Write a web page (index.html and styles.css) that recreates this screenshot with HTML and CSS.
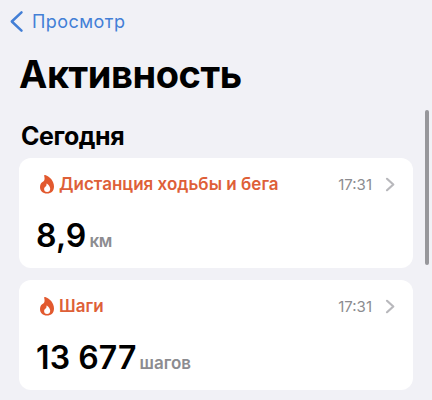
FILE: index.html
```html
<!DOCTYPE html>
<html lang="ru">
<head>
<meta charset="utf-8">
<title>Активность</title>
<link rel="stylesheet" href="styles.css">
</head>
<body>
<nav class="nav">
  <svg class="back" viewBox="0 0 13 21"><path d="M11.500 1.300 1.800 10.500l9.700 9.200"/></svg>
  <span class="nav-label">Просмотр</span>
</nav>
<h1 class="title">Активность</h1>
<h2 class="section">Сегодня</h2>
<main class="cards">
  <section class="card">
    <header class="head">
      <svg class="flame" viewBox="0 0 14 19"><path fill-rule="evenodd" d="M5.200.1C10 1.500 14 6.400 14 11.500C14 15.800 11.200 18.600 7 18.600C2.800 18.600 0 16 0 12.100C0 8.800 1.700 6.900 3.300 6.400C4.600 5.700 4.900 3.300 4.300 1.400C4 .4 4.300-.1 5.200.1ZM7.100 8.700C8.800 9.900 10.200 11.900 10.200 13.800C10.200 15.800 9 17.100 7.100 17.100C5.200 17.100 4.100 15.900 4.100 14.100C4.100 12.800 4.800 12.100 5.600 11.400C6.400 10.700 6.500 10 6.500 9.200C6.500 8.700 6.800 8.500 7.100 8.700Z"/></svg>
      <span class="name">Дистанция ходьбы и бега</span>
      <time class="time">17:31</time>
      <svg class="chevron" viewBox="0 0 8 13"><path d="M1 .8 7.300 6.500 1 12.200"/></svg>
    </header>
    <p class="reading"><span class="value">8,9</span><span class="unit unit-km">км</span></p>
  </section>
  <section class="card">
    <header class="head">
      <svg class="flame" viewBox="0 0 14 19"><path fill-rule="evenodd" d="M5.200.1C10 1.500 14 6.400 14 11.500C14 15.800 11.200 18.600 7 18.600C2.800 18.600 0 16 0 12.100C0 8.800 1.700 6.900 3.300 6.400C4.600 5.700 4.900 3.300 4.300 1.400C4 .4 4.300-.1 5.200.1ZM7.100 8.700C8.800 9.900 10.200 11.900 10.200 13.800C10.200 15.800 9 17.100 7.100 17.100C5.200 17.100 4.100 15.900 4.100 14.100C4.100 12.800 4.800 12.100 5.600 11.400C6.400 10.700 6.500 10 6.500 9.200C6.500 8.700 6.800 8.500 7.100 8.700Z"/></svg>
      <span class="name">Шаги</span>
      <time class="time">17:31</time>
      <svg class="chevron" viewBox="0 0 8 13"><path d="M1 .8 7.300 6.500 1 12.200"/></svg>
    </header>
    <p class="reading"><span class="value">13 677</span><span class="unit">шагов</span></p>
  </section>
</main>
<div class="scrollbar"></div>
</body>
</html>
```
FILE: styles.css
```css
* { box-sizing: border-box; }
body {
  margin: 0;
  height: 400px;
  overflow: hidden;
  background: #f1f1f6;
  color: #000;
  font-family: Inter, "Liberation Sans", sans-serif;
}
svg { display: block; flex: none; overflow: visible; }
.nav { display: flex; align-items: center; height: 42px; padding-left: 10px; color: #437fd6; }
.back { width: 13px; height: 21px; fill: none; stroke: currentColor; stroke-width: 2.5; stroke-linecap: round; stroke-linejoin: round; }
.nav-label { margin-left: 9px; padding-top: 2px; font-size: 18px; line-height: 24px; letter-spacing: 0.45px; }
.title { margin: 8px 0 0 19px; font-size: 38px; line-height: 48px; font-weight: 700; letter-spacing: -0.45px; white-space: nowrap; }
.section { margin: 22px 0 0 21px; font-size: 25px; line-height: 32px; font-weight: 700; letter-spacing: -0.4px; }
.cards { display: grid; gap: 12px; margin: 6px 19px 0; }
.card { height: 110px; padding: 15px 19px 0 21px; border-radius: 12px; background: #fff; }
.head { display: flex; align-items: center; height: 23px; }
.flame { width: 14px; height: 19px; fill: #e2592e; }
.name { margin-left: 5px; padding-bottom: 2px; color: #de6038; font-size: 17px; font-weight: 600; letter-spacing: 0.02px; white-space: nowrap; }
.time { margin-left: auto; color: #8c8c90; font-size: 15px; }
.chevron { width: 8px; height: 13px; margin-left: 14px; fill: none; stroke: #b8b8bc; stroke-width: 2.2; stroke-linecap: round; stroke-linejoin: round; }
.reading { display: flex; align-items: baseline; margin: 19px 0 0 -4px; line-height: 42px; white-space: nowrap; }
.value { font-size: 32px; font-weight: 600; letter-spacing: 0.1px; }
.unit { margin-left: 3px; color: #8c8c90; font-size: 17px; font-weight: 600; }
.unit-km { letter-spacing: -0.3px; }
.scrollbar { position: absolute; left: 425px; top: 110px; width: 4px; height: 155px; border-radius: 2px; background: #97979b; }
```
